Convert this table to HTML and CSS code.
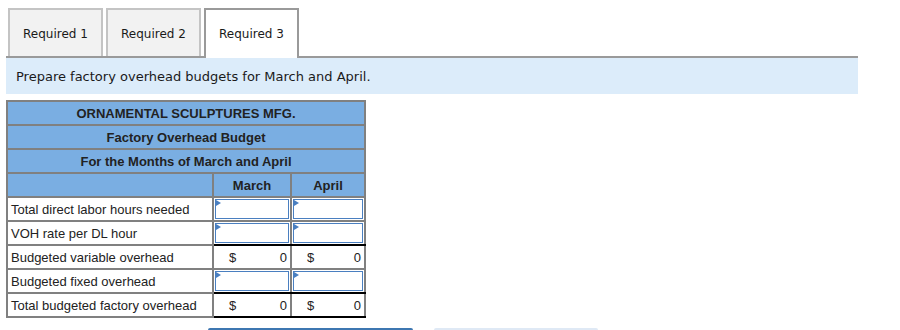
FILE: index.html
```html
<!DOCTYPE html>
<html>
<head>
<meta charset="utf-8">
<link rel="stylesheet" href="styles.css">
</head>
<body>
<div class="page">
  <div class="tabs">
    <div class="tab">Required 1</div>
    <div class="tab">Required 2</div>
    <div class="tab active">Required 3</div>
  </div>
  <div class="prompt">Prepare factory overhead budgets for March and April.</div>
  <table class="budget">
    <colgroup>
      <col class="c-label">
      <col class="c-mar">
      <col class="c-apr">
    </colgroup>
    <tr class="hd"><th colspan="3">ORNAMENTAL SCULPTURES MFG.</th></tr>
    <tr class="hd"><th colspan="3">Factory Overhead Budget</th></tr>
    <tr class="hd"><th colspan="3">For the Months of March and April</th></tr>
    <tr class="hd"><th></th><th>March</th><th>April</th></tr>
    <tr>
      <td class="lbl">Total direct labor hours needed</td>
      <td class="in"><div class="box"></div></td>
      <td class="in"><div class="box"></div></td>
    </tr>
    <tr>
      <td class="lbl">VOH rate per DL hour</td>
      <td class="in ul"><div class="box"></div></td>
      <td class="in ul"><div class="box"></div></td>
    </tr>
    <tr>
      <td class="lbl">Budgeted variable overhead</td>
      <td class="val"><div class="amt"><span>$</span><span>0</span></div></td>
      <td class="val"><div class="amt"><span>$</span><span>0</span></div></td>
    </tr>
    <tr>
      <td class="lbl">Budgeted fixed overhead</td>
      <td class="in ul"><div class="box"></div></td>
      <td class="in ul"><div class="box"></div></td>
    </tr>
    <tr>
      <td class="lbl">Total budgeted factory overhead</td>
      <td class="val ul"><div class="amt"><span>$</span><span>0</span></div></td>
      <td class="val ul"><div class="amt"><span>$</span><span>0</span></div></td>
    </tr>
  </table>
  <div class="buttons">
    <div class="btn primary"></div>
    <div class="btn secondary"></div>
  </div>
</div>
</body>
</html>
```

FILE: styles.css
```css
html, body {
  margin: 0;
  padding: 0;
  background: #ffffff;
  overflow: hidden;
}

.page {
  padding: 8px 42px 0 6px;
  font-family: "DejaVu Sans", Verdana, sans-serif;
  color: #111;
}

.tabs {
  display: flex;
  gap: 3px;
  padding-left: 2px;
  border-bottom: 2px solid #9a9a9a;
  height: 48px;
}

.tab {
  box-sizing: border-box;
  width: 95px;
  height: 48px;
  padding-top: 2px;
  background: #f2f2f2;
  border: 2px solid #c4c4c4;
  border-bottom: none;
  display: flex;
  align-items: center;
  justify-content: center;
  font-size: 12px;
  color: #1a1a1a;
}

.tab.active {
  background: #ffffff;
  border: 2px solid #9a9a9a;
  border-bottom: none;
  height: 50px;
  padding-top: 0;
}

.prompt {
  background: #dcecfa;
  height: 36px;
  display: flex;
  align-items: center;
  padding-left: 10px;
  font-size: 13px;
  color: #1a1a1a;
}

.budget {
  margin-top: 6px;
  border-collapse: collapse;
  border: 2px solid #808080;
  font-family: "Liberation Sans", Arial, sans-serif;
  font-size: 13px;
  color: #222;
  table-layout: fixed;
  width: 358px;
}

.c-label { width: 206px; }
.c-mar { width: 78px; }
.c-apr { width: 74px; }

.budget th,
.budget td {
  border: 2px solid #808080;
  height: 22px;
  padding: 0;
  box-sizing: border-box;
}

.budget tr { height: 24px; }

.hd th {
  background: #7aaee2;
  font-weight: bold;
  text-align: center;
  color: #222;
}

.lbl {
  padding-left: 3px !important;
  text-align: left;
  white-space: nowrap;
}

.in .box {
  position: relative;
  box-sizing: border-box;
  height: 20px;
  margin: 0 1px;
  border: 1px solid #4a7fc0;
  background: #fff;
}

.in .box::before {
  content: "";
  position: absolute;
  left: 0;
  top: 0;
  border-top: 3px solid transparent;
  border-bottom: 3px solid transparent;
  border-left: 5px solid #4a7fc0;
}

.budget td.ul {
  border-bottom: 2px solid #000;
}

.amt {
  display: flex;
  justify-content: space-between;
  padding: 0 3px 0 15px;
}

.buttons {
  display: flex;
  gap: 21px;
  margin-top: 10px;
  padding-left: 202px;
}

.btn {
  height: 2px;
  border-radius: 3px 3px 0 0;
}

.btn.primary {
  width: 205px;
  background: #3e77b1;
}

.btn.secondary {
  width: 164px;
  background: #dfe9f5;
}
```
